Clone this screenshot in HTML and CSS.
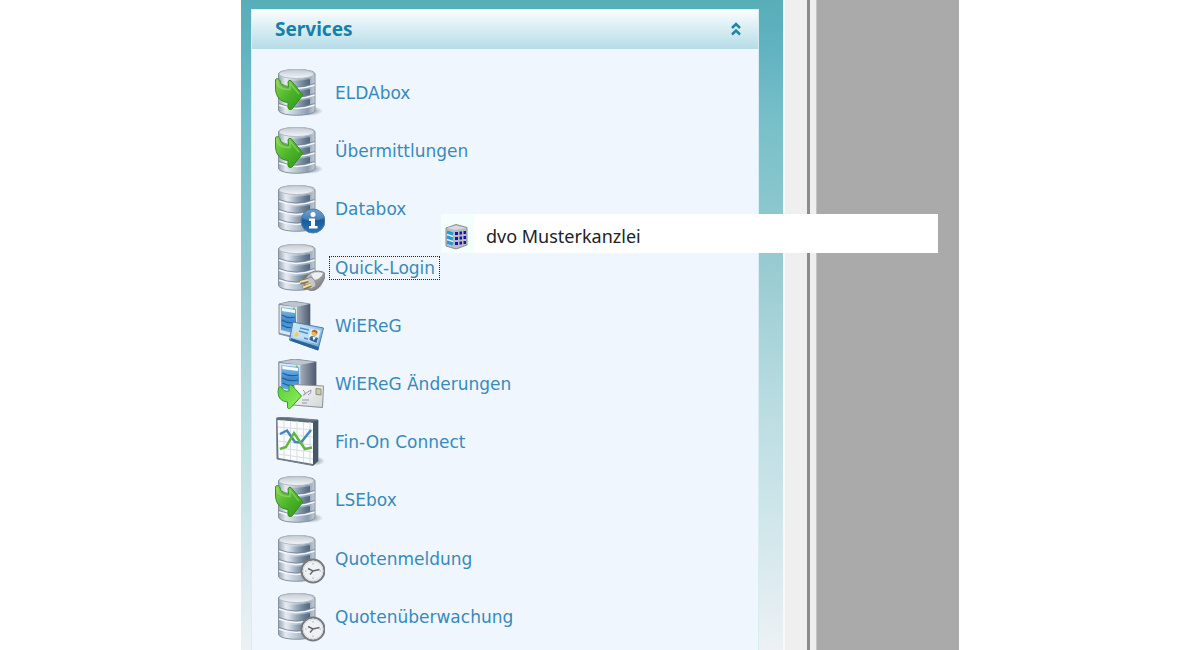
FILE: index.html
```html
<!DOCTYPE html>
<html lang="de">
<head>
    <meta charset="UTF-8">
    <meta name="viewport" content="width=device-width, initial-scale=1.0">
    <title>Services</title>
    <link rel="stylesheet" href="styles.css">
</head>
<body>

    <!-- shared icon parts -->
    <svg class="defs" aria-hidden="true">
        <defs>
            <linearGradient id="metal">
                <stop offset="0" stop-color="#98a5b4"/>
                <stop offset=".2" stop-color="#e6ebf1"/>
                <stop offset=".5" stop-color="#b8c5d3"/>
                <stop offset=".8" stop-color="#8c9eb1"/>
                <stop offset="1" stop-color="#c6ced8"/>
            </linearGradient>
            <linearGradient id="slot">
                <stop offset="0" stop-color="#6b8095" stop-opacity="0"/>
                <stop offset="1" stop-color="#52687e"/>
            </linearGradient>
            <linearGradient id="lid" x2="0" y2="1">
                <stop offset="0" stop-color="#c3cad2"/>
                <stop offset="1" stop-color="#f3f6fa"/>
            </linearGradient>
            <linearGradient id="green" x2="1" y2="1">
                <stop offset="0" stop-color="#8ad651"/>
                <stop offset=".5" stop-color="#4db52b"/>
                <stop offset="1" stop-color="#2d9615"/>
            </linearGradient>
            <linearGradient id="lime" x2="1" y2="1">
                <stop offset="0" stop-color="#58cf3a"/>
                <stop offset="1" stop-color="#90f25c"/>
            </linearGradient>
            <linearGradient id="blue" x2="0" y2="1">
                <stop offset="0" stop-color="#4f8fc9"/>
                <stop offset=".5" stop-color="#1c5c9f"/>
                <stop offset="1" stop-color="#2d78b8"/>
            </linearGradient>
            <linearGradient id="side">
                <stop offset="0" stop-color="#a3acb9"/>
                <stop offset="1" stop-color="#4e5b70"/>
            </linearGradient>
            <linearGradient id="plug" x2="1" y2="1">
                <stop offset="0" stop-color="#d9dadc"/>
                <stop offset="1" stop-color="#67696d"/>
            </linearGradient>
            <linearGradient id="front" x2="0" y2="1">
                <stop offset="0" stop-color="#8fc1ec"/>
                <stop offset=".5" stop-color="#3d8bcd"/>
                <stop offset="1" stop-color="#69aee0"/>
            </linearGradient>
            <linearGradient id="card" x2="1" y2="1">
                <stop offset="0" stop-color="#d9effc"/>
                <stop offset="1" stop-color="#5ea0d6"/>
            </linearGradient>
            <linearGradient id="paper" x2="1" y2="1">
                <stop offset="0" stop-color="#ffffff"/>
                <stop offset="1" stop-color="#d3d4d6"/>
            </linearGradient>
            <radialGradient id="shade">
                <stop offset="0" stop-color="#40464e" stop-opacity=".7"/>
                <stop offset="1" stop-color="#40464e" stop-opacity="0"/>
            </radialGradient>

            <symbol id="cylinder" viewBox="0 0 50 50">
                <ellipse cx="34" cy="43" rx="14" ry="5" fill="url(#shade)"/>
                <path d="M3.500 6C3.500 0 40 0 40 6V42C40 49 3.500 49 3.500 42Z" fill="url(#metal)" stroke="#8491a0"/>
                <ellipse cx="21.500" cy="6" rx="17.500" ry="4.500" fill="url(#lid)" stroke="#b4bdc7"/>
                <path d="M14 12.500Q26 13.500 35 11V17Q26 20 14 19Z" fill="url(#slot)"/>
                <path d="M14 22.500Q26 23.500 35 21V27Q26 30 14 29Z" fill="url(#slot)"/>
                <path d="M14 32.500Q26 33.500 35 31V37Q26 40 14 39Z" fill="url(#slot)"/>
                <path d="M4 17Q21 24 39.500 17M4 27Q21 34 39.500 27M4 37Q21 44 39.500 37" fill="none" stroke="#f4f7fa" stroke-width="1.500"/>
                <path d="M4 15.500Q21 22.500 39.500 15.500M4 25.500Q21 32.500 39.500 25.500M4 35.500Q21 42.500 39.500 35.500" fill="none" stroke="#718195" stroke-width=".8"/>
            </symbol>

            <symbol id="inbox" viewBox="0 0 50 50">
                <use href="#cylinder"/>
                <path d="M.5 11.500C2 9.500 4.500 11 5 13C6 17 9 19 13.500 19L13 14Q13.500 11.500 16 12.500L28 27L17 41Q14 43 13 40V34.500C5 34 .5 28 .5 20Z" fill="url(#green)" stroke="#348f1c"/>
                <path d="M1.500 13C3 19 6 22 15 21.500V15L24 26" fill="none" stroke="#a5e37a" stroke-width="1.500" opacity=".5"/>
            </symbol>

            <symbol id="clock" viewBox="0 0 50 50">
                <use href="#cylinder"/>
                <circle cx="38" cy="37" r="11.500" fill="#eff2f5" stroke="#77797c" stroke-width="2"/>
                <circle cx="38" cy="37" r="9.800" fill="none" stroke="#d5d8dc"/>
                <path d="M33 34.500L38 37L44.500 35.500M38 37L35 40.500" fill="none" stroke="#67696c" stroke-width="1.400"/>
                <path d="M38 29V30.500M38 43.500V45M30 37H31.500M44.500 37H46" stroke="#a4a8ae"/>
            </symbol>

            <symbol id="server" viewBox="0 0 50 50">
                <path d="M4 3L17 0L35 3V33L20 37L4 33Z" fill="#78869a" stroke="#8993a2"/>
                <path d="M22 6L35 3V33L22 37Z" fill="url(#side)"/>
                <path d="M4.500 3L17 .5L34 3L22 6Z" fill="#bdc5cf"/>
                <path d="M4.500 4L22 6V36L4.500 32Z" fill="#dce5ee"/>
                <path d="M6 6L21 8V33L6 29Z" fill="url(#front)"/>
                <path d="M7 7L20 9V12L7 10Z" fill="#f7fbff"/>
                <path d="M7 14Q13 18 20 16M7 19Q13 23 20 21M7 24Q13 28 20 26" fill="none" stroke="#235f9f" stroke-width="1.200"/>
                <circle cx="19" cy="7.500" r="1" fill="#54c95a"/>
            </symbol>
        </defs>
    </svg>

    <div class="window">
        <aside class="sidebar">
            <section class="panel">
                <header class="panelHeader">
                    <h1 class="panelTitle">Services</h1>
                    <button class="collapse" type="button" aria-label="Services einklappen">
                        <svg width="10" height="14" viewBox="0 0 10 14" fill="none" stroke="#1f86a8" stroke-width="2.500">
                            <path d="M1 6L5 2L9 6M1 12.500L5 8.500L9 12.500"/>
                        </svg>
                    </button>
                </header>
                <nav class="services">
                    <a class="service" href="#">
                        <svg class="icon"><use href="#inbox"/></svg>
                        <span class="label">ELDAbox</span>
                    </a>
                    <a class="service" href="#">
                        <svg class="icon"><use href="#inbox"/></svg>
                        <span class="label">Übermittlungen</span>
                    </a>
                    <a class="service" href="#">
                        <svg class="icon" viewBox="0 0 50 50">
                            <use href="#cylinder"/>
                            <circle cx="38" cy="37" r="12" fill="url(#blue)" stroke="#527fae"/>
                            <path d="M27 34C29 23 47 23 49 34Q38 39 27 34Z" fill="#fff" opacity=".18"/>
                            <circle cx="38" cy="30.500" r="2.500" fill="#fff"/>
                            <path d="M34 34.500H40V42H42.500V44.500H34V42H36V37H34Z" fill="#fff"/>
                        </svg>
                        <span class="label">Databox</span>
                    </a>
                    <a class="service" href="#">
                        <svg class="icon" viewBox="0 0 50 50">
                            <use href="#cylinder"/>
                            <path d="M33 32Q39 26 48 29Q51 30 49.500 35Q46 44 40 47Q35 49 31 45L28 39Z" fill="url(#plug)" stroke="#808286"/>
                            <path d="M36 31Q41 28 48 30Q46 36 39 37Z" fill="#eeeff0"/>
                            <path d="M29 37L36 34Q41 37 41 43L36 46L31 44Z" fill="#c6c7c7" stroke="#8d8f91"/>
                            <path d="M25 39.500L33 37.500M28 45L36 42" stroke="#80713d" stroke-width="4"/>
                            <path d="M25 39L33 37M28 44.500L36 41.500" stroke="#eedfa0" stroke-width="2"/>
                        </svg>
                        <span class="label focused">Quick-Login</span>
                    </a>
                    <a class="service" href="#">
                        <svg class="icon" viewBox="0 0 50 50">
                            <use href="#server"/>
                            <path d="M18 21L48.500 27L43 49L14.500 39Z" fill="url(#card)" stroke="#4b7eae"/>
                            <path d="M15 39.500L43 49.500L44 46L16 37Z" fill="#2b639a"/>
                            <path d="M20.500 24L46 29L42 43L18 36Z" fill="#c5e4f7" opacity=".8"/>
                            <path d="M25 27L34 29M24 30L33 32.500M29 37L34 38.500" stroke="#4f91c6" stroke-width="1.500"/>
                            <path d="M19 34L22 30.500L24 34L21 36Z" fill="#f1cf45"/>
                            <path d="M36 28L45 30L42 42L33 39Z" fill="#e8eef2"/>
                            <circle cx="39.500" cy="32" r="3" fill="#e5b568"/>
                            <path d="M34.500 39Q34 35 38 35L43 37L41.500 42Z" fill="#35658c"/>
                            <path d="M37.500 35.500L41 36.500L38.500 39.500Z" fill="#fff"/>
                            <path d="M36.500 31Q38 27 42 30Q43 32 42 33Q40 30 36.500 31Z" fill="#a66b27"/>
                        </svg>
                        <span class="label">WiEReG</span>
                    </a>
                    <a class="service" href="#">
                        <svg class="icon" viewBox="0 0 50 50">
                            <svg x="-1" width="60" height="50" viewBox="0 0 50 50" preserveAspectRatio="none"><use href="#server"/></svg>
                            <path d="M19 25.500L48.500 27L47.500 48.500L18 46Z" fill="url(#paper)" stroke="#8c8f93"/>
                            <path d="M41 29.500L46 30V36L41 35.500Z" fill="#c8cfa8" stroke="#8d9276"/>
                            <path d="M28 31Q32 35 29 36T36 31Q37 34 33 36M27 41H34M27 44H32" fill="none" stroke="#8d99ab"/>
                            <path d="M3.500 29Q5 26 7 29Q9 33 14 32V27Q15 25 17 26.500L26.500 37L16 48.500Q13 51 12.500 48V43Q3 42 3 33Z" fill="url(#lime)" stroke="#3b9b2a"/>
                        </svg>
                        <span class="label">WiEReG Änderungen</span>
                    </a>
                    <a class="service" href="#">
                        <svg class="icon" viewBox="0 0 50 50">
                            <ellipse cx="38" cy="44" rx="12" ry="5" fill="url(#shade)"/>
                            <path d="M1.500 1L6 0L43 3V44L38 48.500L2 42Z" fill="#5f6f7c" stroke="#75828d"/>
                            <path d="M38 5L43 3V44L38 48Z" fill="#445767"/>
                            <path d="M2.500 3L38 6V47L3.500 41Z" fill="#fbfcfd"/>
                            <path d="M9 3V42M15.500 4V43M22 4V44M28.500 5V45M35 5V46M3 10L38 13M3 17L38 20M3 24L38 28M3 31L38 35M3 37L38 42" fill="none" stroke="#d7dee5"/>
                            <path d="M5 17L12 13.500L20 25L26 25.500L36 13" fill="none" stroke="#4686c0" stroke-width="2.500"/>
                            <path d="M5 32L11 30L19 16L30 32L37 30.500" fill="none" stroke="#5db83b" stroke-width="2.500"/>
                        </svg>
                        <span class="label">Fin-On Connect</span>
                    </a>
                    <a class="service" href="#">
                        <svg class="icon"><use href="#inbox"/></svg>
                        <span class="label">LSEbox</span>
                    </a>
                    <a class="service" href="#">
                        <svg class="icon"><use href="#clock"/></svg>
                        <span class="label">Quotenmeldung</span>
                    </a>
                    <a class="service" href="#">
                        <svg class="icon"><use href="#clock"/></svg>
                        <span class="label">Quotenüberwachung</span>
                    </a>
                </nav>
            </section>
        </aside>
        <div class="splitter"></div>
        <main class="workspace"></main>

        <!-- flyout over sidebar and workspace -->
        <div class="flyout">
            <span class="flyoutIcon">
                <svg width="24" height="26" viewBox="0 0 24 26">
                    <path d="M1 4L11 .5L22 3.500V21L11 25L1 22Z" fill="#b9bcc0" stroke="#8c8d91"/>
                    <path d="M2 4L11 1.500L21 4L10 6Z" fill="#d9dadb"/>
                    <path d="M2 8L8 10M2 13L8 15M2 18L8 20" stroke="#239bdc" stroke-width="3"/>
                    <path d="M2 10.500L8 12.500M2 15.500L8 17.500" stroke="#eefaff"/>
                    <path d="M10 8H13V11H10ZM14.500 7.500H17V10.500H14.500ZM18.500 7H21V10H18.500ZM10 13H13V16H10ZM14.500 12.500H17V15.500H14.500ZM18.500 12H21V15H18.500ZM10 18H13V21H10ZM14.500 17.500H17V20.500H14.500ZM18.500 17H21V20H18.500Z" fill="#1413bd"/>
                </svg>
            </span>
            <span class="flyoutText">dvo Musterkanzlei</span>
        </div>
    </div>

</body>
</html>
```
FILE: styles.css
```css
* {
    box-sizing: border-box;
}
body {
    margin: 0;
    padding: 0 241px;
    background: #fff;
    font-family: "DejaVu Sans", Verdana, sans-serif;
}
.defs {
    position: absolute;
    width: 0;
    height: 0;
}
.window {
    display: flex;
    min-height: 100vh;
    position: relative;
}
.sidebar {
    flex: 1;
    display: flex;
    padding: 9px 24px 0 10px;
    background: linear-gradient(#57aeb9 0%, #62b3c1 8%, #78c0c9 19%, #9accd2 42%, #b9dce1 62%, #d3e8ec 83%, #edf1f5 100%);
}
.panel {
    flex: 1;
    display: flex;
    flex-direction: column;
    background: #f0f6fe;
    border: 1px solid #d6edf4;
    border-bottom: 0;
}
.panelHeader {
    display: flex;
    align-items: center;
    justify-content: space-between;
    height: 39px;
    padding: 0 17px 2px 23px;
    background: linear-gradient(#fafdfd, #b5dce8);
}
.panelTitle {
    margin: 0;
    font-family: "Noto Sans", Tahoma, sans-serif;
    font-size: 19px;
    font-weight: 700;
    color: #1580a8;
}
.collapse {
    display: flex;
    padding: 0;
    border: 0;
    background: none;
    cursor: pointer;
}
.services {
    flex: 1;
    display: grid;
    grid-auto-rows: 1fr;
    padding: 15px 0 4px 23px;
}
.service {
    display: flex;
    align-items: center;
    gap: 4px;
    color: #388abb;
    text-decoration: none;
}
.icon {
    width: 50px;
    height: 50px;
}
.label {
    padding: 0 0 0 5px;
    border: 1px solid transparent;
    font-size: 17px;
    line-height: 22px;
}
.focused {
    padding-right: 4px;
    border: 1px dotted #222;
}
.splitter {
    width: 34px;
    background: linear-gradient(to right, #f8f8f8 2px, #efefef 2px, #efefef 24px, #8c8c8c 24px, #8c8c8c 27px, #efefef 27px, #efefef 33px, #c4c4c4 33px);
}
.workspace {
    width: 142px;
    background: #aaa;
}
.flyout {
    position: absolute;
    top: 214px;
    left: 200px;
    right: 21px;
    display: flex;
    align-items: center;
    height: 39px;
    gap: 12px;
    background: #fff;
}
.flyoutIcon {
    display: flex;
    align-items: center;
    height: 100%;
    padding: 6px 5px 0 4px;
    background: #f3fefd;
}
.flyoutText {
    padding-top: 4px;
    font-family: "Noto Sans", "Segoe UI", sans-serif;
    font-size: 18px;
    color: #222;
}
```
